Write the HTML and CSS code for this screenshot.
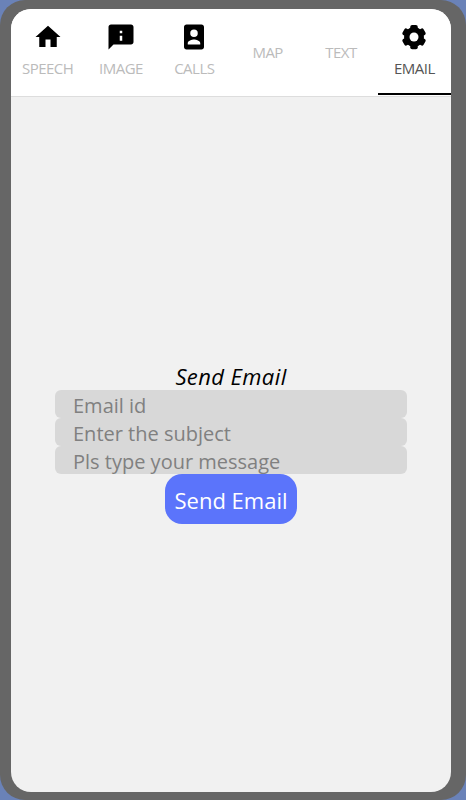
FILE: index.html
```html
<!DOCTYPE html>
<html lang="en">
<head>
  <meta charset="UTF-8">
  <meta name="viewport" content="width=device-width, initial-scale=1.0">
  <title>Send Email</title>
  <link rel="stylesheet" href="styles.css">
</head>
<body>

<div class="frame">
  <div class="screen">
    <nav class="tabs">
      <a class="tab">
        <svg class="tab-icon" viewBox="0 0 24 24"><path d="M10 20v-6h4v6h5v-8h3L12 3 2 12h3v8z"/></svg>
        <span>SPEECH</span>
      </a>
      <a class="tab">
        <svg class="tab-icon" viewBox="0 0 24 24"><path fill-rule="evenodd" d="M20 2H4c-1.100 0-1.990.9-1.990 2L2 22l4-4h14c1.100 0 2-.9 2-2V4c0-1.100-.9-2-2-2zM11 7h2v2h-2zM11 11h2v4h-2z"/></svg>
        <span>IMAGE</span>
      </a>
      <a class="tab">
        <svg class="tab-icon" viewBox="0 0 24 24"><path fill-rule="evenodd" d="M6 2h12c1.100 0 2 .9 2 2v16c0 1.100-.9 2-2 2H6c-1.100 0-2-.9-2-2V4c0-1.100.9-2 2-2zM12 6a3 3 0 1 0 0 6 3 3 0 0 0 0-6zM7 18h10v-1c0-2-3.300-3-5-3s-5 1-5 3z"/></svg>
        <span>CALLS</span>
      </a>
      <a class="tab">
        <span>MAP</span>
      </a>
      <a class="tab">
        <span>TEXT</span>
      </a>
      <a class="tab active">
        <svg class="tab-icon" viewBox="0 0 24 24">
          <circle cx="12" cy="12" r="8"/>
          <rect x="9" y="2.300" width="6" height="19.400" rx="1.500"/>
          <rect x="9" y="2.300" width="6" height="19.400" rx="1.500" transform="rotate(60 12 12)"/>
          <rect x="9" y="2.300" width="6" height="19.400" rx="1.500" transform="rotate(120 12 12)"/>
          <circle class="gear-hole" cx="12" cy="12" r="3.600"/>
        </svg>
        <span>EMAIL</span>
      </a>
    </nav>

    <main class="content">
      <h2 class="form-title">Send Email</h2>
      <form class="email-form">
        <input type="text" placeholder="Email id">
        <input type="text" placeholder="Enter the subject">
        <input type="text" placeholder="Pls type your message">
        <button type="button">Send Email</button>
      </form>
    </main>
  </div>
</div>

</body>
</html>
```

FILE: styles.css
```css
* {
  box-sizing: border-box;
}
body {
  margin: 0;
  background-color: #6a82b8;
  font-family: 'Open Sans', 'Noto Sans', sans-serif;
}
.frame {
  height: 800px;
  padding: 9px 15px 8px 11px;
  background-color: #666;
  border-radius: 25px;
}
.screen {
  height: 100%;
  background-color: #f1f1f1;
  border-radius: 20px;
  overflow: hidden;
  display: flex;
  flex-direction: column;
}
.tabs {
  display: flex;
  height: 88px;
  flex-shrink: 0;
  background-color: #fff;
  border-bottom: 1px solid #ddd;
}
.tab {
  flex: 1;
  position: relative;
  display: flex;
  flex-direction: column;
  align-items: center;
  justify-content: center;
  gap: 2px;
  padding-bottom: 2px;
  font-size: 15px;
  letter-spacing: -0.5px;
  color: #bbb;
}
.tab.active {
  color: #555;
}
.tab.active::after {
  content: "";
  position: absolute;
  left: 0;
  right: 0;
  bottom: 1px;
  height: 2px;
  background-color: #000;
}
.tab-icon {
  width: 30px;
  height: 30px;
  margin: -4px 0 4px;
  fill: #000;
}
.gear-hole {
  fill: #fff;
}
.content {
  flex: 1;
  display: flex;
  flex-direction: column;
  align-items: center;
  justify-content: center;
}
.form-title {
  margin: 0 0 2px;
  font-size: 22px;
  line-height: 23px;
  letter-spacing: 0.4px;
  font-weight: 400;
  font-style: italic;
  color: #000;
}
.email-form {
  display: flex;
  flex-direction: column;
  align-items: center;
  width: 352px;
}
.email-form input {
  width: 100%;
  height: 28px;
  padding: 2px 18px 0;
  border: none;
  border-radius: 6px;
  background-color: #d8d8d8;
  font-family: inherit;
  font-size: 20px;
}
.email-form input::placeholder {
  color: #808080;
  opacity: 1;
}
.email-form button {
  width: 132px;
  height: 50px;
  padding: 2px 0 0;
  border: none;
  border-radius: 17px;
  background-color: #5b74fb;
  color: #fff;
  font-family: inherit;
  font-size: 22px;
  cursor: pointer;
}
```
